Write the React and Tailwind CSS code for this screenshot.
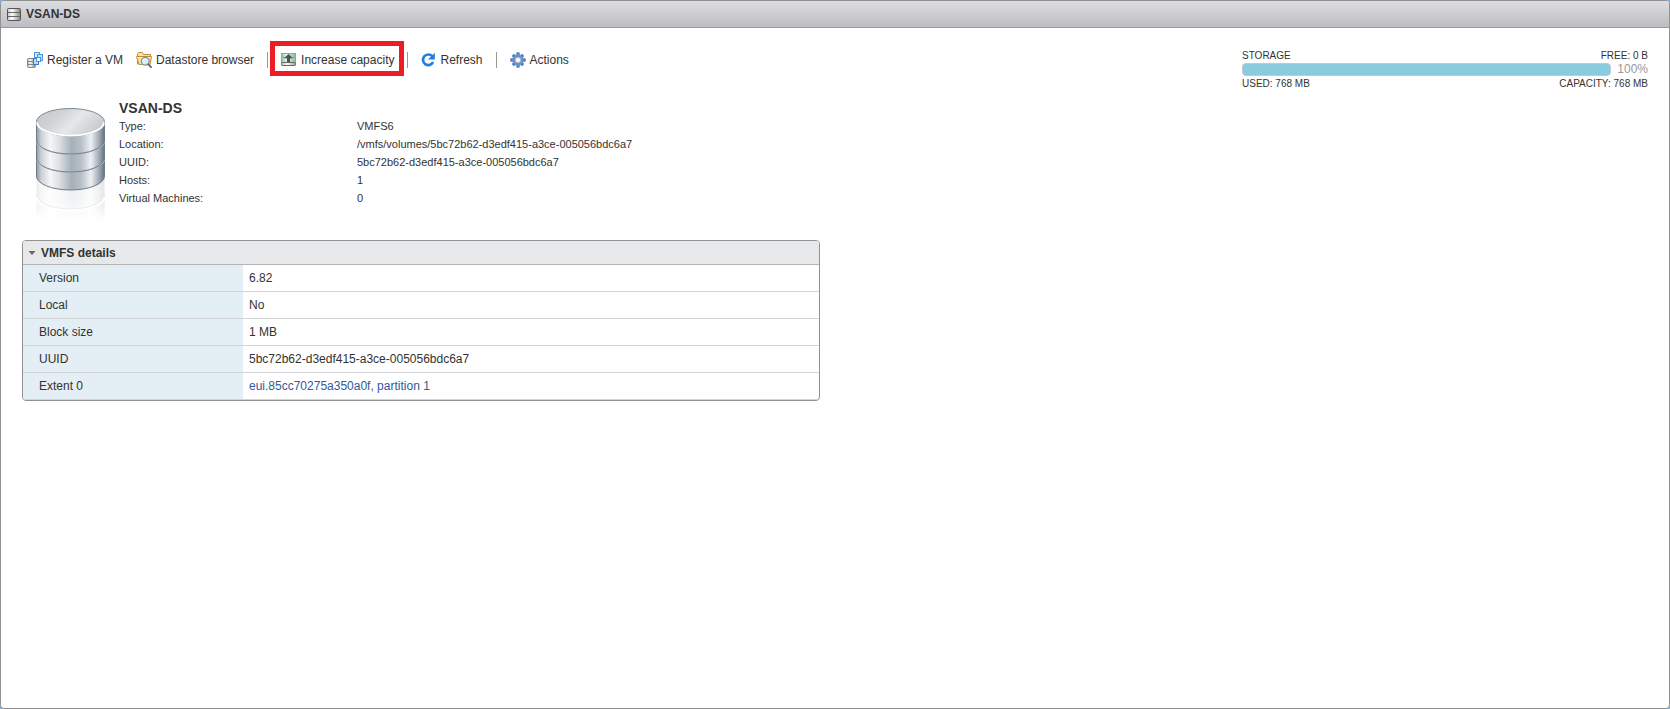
import React, { useState } from "react";

function ServerStackIcon() {
  return (
    <svg width="16" height="16" viewBox="0 0 16 16" aria-hidden="true">
      <defs>
        <linearGradient id="stackFill" x1="0" x2="1" y1="0" y2="0">
          <stop offset="0" stopColor="#c4c4c4" />
          <stop offset="0.35" stopColor="#ffffff" />
          <stop offset="1" stopColor="#858585" />
        </linearGradient>
      </defs>
      <rect x="1.5" y="2.5" width="13" height="12" rx="1" fill="url(#stackFill)" stroke="#555" />
      <path d="M2 6.5h12M2 10.5h12" stroke="#666" />
    </svg>
  );
}

function RegisterVmIcon() {
  return (
    <svg width="16" height="16" viewBox="0 0 16 16" aria-hidden="true">
      <defs>
        <linearGradient id="regFill" x1="0" x2="1" y1="0" y2="0">
          <stop offset="0" stopColor="#b0b0b0" />
          <stop offset="0.35" stopColor="#fafafa" />
          <stop offset="1" stopColor="#808080" />
        </linearGradient>
      </defs>
      <rect x="0.5" y="6.5" width="8" height="9" rx="1" fill="url(#regFill)" stroke="#888" />
      <path d="M1 9.5h7M1 12.5h7" stroke="#888" />
      <rect x="7.5" y="0.5" width="5" height="5" fill="#d6ebfd" stroke="#4a96e0" />
      <rect x="10.5" y="2.5" width="5" height="6" fill="#c4e1fb" stroke="#4a96e0" />
      <rect x="6.5" y="6.5" width="5" height="6" fill="#b9dcfa" stroke="#2f80d0" />
      <rect x="9.5" y="5.5" width="4" height="4" fill="#eaf5fe" stroke="#4a96e0" />
    </svg>
  );
}

function FolderSearchIcon() {
  return (
    <svg width="16" height="16" viewBox="0 0 16 16" aria-hidden="true">
      <path d="M1.5 12.5V1.5L2.5 0.5H6.5L7.5 2.5H14.5V5" fill="#f9e3ac" stroke="#c08c3a" />
      <path d="M0.5 4.5H15.5L14 12.5H3Z" fill="#fbdf9c" stroke="#c08c3a" strokeLinejoin="round" />
      <path d="M1.5 5.5H14.5" stroke="#fff2cf" />
      <circle cx="9.3" cy="9.3" r="3.9" fill="#d9edfa" stroke="#7b93a8" strokeWidth="1.2" />
      <path d="M7.2 9.3a2.2 2.2 0 0 1 2-2.2" stroke="#fff" fill="none" />
      <path d="M12.2 12.2L15 15.2" stroke="#5b6874" strokeWidth="1.8" strokeLinecap="round" />
    </svg>
  );
}

function IncreaseIcon() {
  return (
    <svg width="16" height="16" viewBox="0 0 16 16" aria-hidden="true">
      <defs>
        <linearGradient id="incFill" x1="0" x2="1" y1="0" y2="0">
          <stop offset="0" stopColor="#8fc3a0" />
          <stop offset="0.35" stopColor="#e4f5e8" />
          <stop offset="1" stopColor="#85bd96" />
        </linearGradient>
        <linearGradient id="incBase" x1="0" x2="1" y1="0" y2="0">
          <stop offset="0" stopColor="#b5b5b5" />
          <stop offset="0.4" stopColor="#fff" />
          <stop offset="1" stopColor="#9a9a9a" />
        </linearGradient>
      </defs>
      <rect x="0.5" y="1.5" width="14" height="9" fill="url(#incFill)" stroke="#86ad92" />
      <path d="M1 5.5h13" stroke="#7fb391" />
      <rect x="0.5" y="10.5" width="14" height="3" rx="0.8" fill="url(#incBase)" stroke="#666" />
      <path d="M7.5 2L12 6.2H9V10H6V6.2H3Z" fill="#505050" />
    </svg>
  );
}

function RefreshIcon() {
  return (
    <svg width="15" height="16" viewBox="1 0 15 16" aria-hidden="true">
      <path d="M12.2 4.2A5.3 5.3 0 1 0 13.1 10" fill="none" stroke="#1f80e0" strokeWidth="2.7" />
      <path d="M14.8 0.8V7.6H8Z" fill="#1f80e0" />
    </svg>
  );
}

function GearIcon() {
  return (
    <svg width="16" height="16" viewBox="0 0 16 16" aria-hidden="true">
      <g fill="#567fbd">
        <rect x="6.3" y="0.2" width="3.4" height="15.6" rx="0.8" />
        <rect x="0.2" y="6.3" width="15.6" height="3.4" rx="0.8" />
        <rect x="6.3" y="0.6" width="3.4" height="14.8" rx="0.8" transform="rotate(45 8 8)" />
        <rect x="6.3" y="0.6" width="3.4" height="14.8" rx="0.8" transform="rotate(-45 8 8)" />
      </g>
      <circle cx="8" cy="8" r="5.7" fill="#6792d0" />
      <circle cx="8" cy="8" r="3.1" fill="#b4bfce" />
      <circle cx="8" cy="8" r="2.1" fill="#fff" />
    </svg>
  );
}

function DatastoreImage() {
  const band = (y) => `M0.5 ${y}A34 14 0 0 0 68.5 ${y}V${y + 18}A34 14 0 0 1 0.5 ${y + 18}Z`;
  return (
    <svg width="69" height="113" viewBox="0 0 69 113" className="shrink-0" role="img" aria-label="Datastore">
      <defs>
        <linearGradient id="band" x1="0" x2="1" y1="0" y2="0">
          <stop offset="0" stopColor="#8f9aa4" />
          <stop offset="0.07" stopColor="#cbd1d6" />
          <stop offset="0.2" stopColor="#f5f6f7" />
          <stop offset="0.32" stopColor="#dfe3e6" />
          <stop offset="0.52" stopColor="#a5b0b9" />
          <stop offset="0.66" stopColor="#b8c1c8" />
          <stop offset="0.8" stopColor="#eef1f3" />
          <stop offset="0.93" stopColor="#99a4af" />
          <stop offset="1" stopColor="#64717e" />
        </linearGradient>
        <linearGradient id="lid" x1="0" x2="1" y1="0.3" y2="0.7">
          <stop offset="0" stopColor="#c6cacd" />
          <stop offset="0.3" stopColor="#d2d5d7" />
          <stop offset="0.55" stopColor="#e6e7e8" />
          <stop offset="0.8" stopColor="#d2d5d7" />
          <stop offset="1" stopColor="#c3c7ca" />
        </linearGradient>
        <linearGradient id="fade" x1="0" x2="0" y1="0" y2="1">
          <stop offset="0" stopColor="#fff" stopOpacity="0.6" />
          <stop offset="0.5" stopColor="#fff" stopOpacity="0.65" />
          <stop offset="1" stopColor="#fff" />
        </linearGradient>
      </defs>
      <path d="M0.5 68V112H68.5V68Z" fill="url(#band)" opacity="0.5" />
      <path d="M0.5 87A34 14 0 0 0 68.5 87" fill="none" stroke="#8d99a4" />
      <path d="M0.5 88.5A34 14 0 0 0 68.5 88.5" fill="none" stroke="#fff" strokeWidth="2" />
      <rect x="0" y="68" width="69" height="45" fill="url(#fade)" />
      {[50, 32, 14].map((y) => (
        <g key={y}>
          <path d={band(y)} fill="url(#band)" stroke="#6e7b87" />
          <path d={`M1 ${y + 1.8}A34 14 0 0 0 68 ${y + 1.8}`} fill="none" stroke="#fff" strokeWidth="2" strokeOpacity="0.85" />
        </g>
      ))}
      <ellipse cx="34.5" cy="14" rx="34" ry="13.5" fill="url(#lid)" />
      <path d="M0.5 14A34 13.5 0 0 1 68.5 14" fill="none" stroke="#7b8791" />
      <path d="M1 14A33.5 13.5 0 0 0 68 14" fill="none" stroke="#fff" strokeWidth="1.5" />
    </svg>
  );
}

function ToolButton({ icon, children, highlighted }) {
  return (
    <button type="button" className="relative flex h-4 items-center gap-1 whitespace-nowrap text-xs leading-4">
      {icon}
      {children}
      {highlighted && (
        <span className="pointer-events-none absolute -top-[11px] -right-[10px] -bottom-2 -left-[11px] border-5 border-[#ee1c25]" />
      )}
    </button>
  );
}

function Separator() {
  return <span className="h-4 w-px bg-[#999]" />;
}

const summary = [
  ["Type:", "VMFS6"],
  ["Location:", "/vmfs/volumes/5bc72b62-d3edf415-a3ce-005056bdc6a7"],
  ["UUID:", "5bc72b62-d3edf415-a3ce-005056bdc6a7"],
  ["Hosts:", "1"],
  ["Virtual Machines:", "0"],
];

const details = [
  ["Version", "6.82"],
  ["Local", "No"],
  ["Block size", "1 MB"],
  ["UUID", "5bc72b62-d3edf415-a3ce-005056bdc6a7"],
  ["Extent 0", "eui.85cc70275a350a0f, partition 1"],
];

export default function App() {
  const [open, setOpen] = useState(true);
  return (
    <div className="flex min-h-screen bg-[#86b0dc] font-['Liberation_Sans',Arial,sans-serif] text-[#333]">
      <div className="flex flex-1 flex-col overflow-hidden rounded-[4px] border border-[#919191] bg-white">
        <header className="flex h-[27px] items-center gap-1 border-b border-[#999] bg-linear-to-b from-[#dedee2] to-[#bcbdc1] pl-[5px]">
          <ServerStackIcon />
          <h1 className="text-xs font-bold leading-4">VSAN-DS</h1>
        </header>

        <main className="px-[21px] pt-[21px]">
          <div className="flex items-start justify-between">
            <div>
              <div className="flex items-center gap-[13px] pt-[3px] pl-[5px]">
                <ToolButton icon={<RegisterVmIcon />}>Register a VM</ToolButton>
                <ToolButton icon={<FolderSearchIcon />}>Datastore browser</ToolButton>
                <Separator />
                <ToolButton icon={<IncreaseIcon />} highlighted>Increase capacity</ToolButton>
                <Separator />
                <ToolButton icon={<RefreshIcon />}>Refresh</ToolButton>
                <Separator />
                <ToolButton icon={<GearIcon />}>Actions</ToolButton>
              </div>

              <section className="mt-[31px] flex gap-[14px] pl-[14px]">
                <div className="pt-[9px]">
                  <DatastoreImage />
                </div>
                <div>
                  <h2 className="text-sm font-bold leading-[18px]">VSAN-DS</h2>
                  <dl className="grid grid-cols-[238px_auto] text-[11px] leading-[18px]">
                    {summary.map(([k, v]) => (
                      <React.Fragment key={k}>
                        <dt>{k}</dt>
                        <dd>{v}</dd>
                      </React.Fragment>
                    ))}
                  </dl>
                </div>
              </section>
            </div>

            <section className="w-[406px] text-[10px] leading-[14px]">
              <div className="flex justify-between">
                <span>STORAGE</span>
                <span>FREE: 0 B</span>
              </div>
              <div className="mb-px flex items-center gap-[6px]">
                <div role="progressbar" aria-valuenow={100} aria-label="Storage used" className="h-[13px] flex-1 rounded-[4px] border border-[#c6c8cc] bg-[#89cbdf]" />
                <span className="text-xs leading-[13px] text-[#999]">100%</span>
              </div>
              <div className="flex justify-between">
                <span>USED: 768 MB</span>
                <span>CAPACITY: 768 MB</span>
              </div>
            </section>
          </div>

          <div className="mt-[19px] grid grid-cols-2 gap-[30px]">
            <section className="overflow-hidden rounded-[4px] border border-[#919191] text-xs">
              <h3 className="border-b border-[#b5b5b5] bg-[#e7e8ea] font-bold">
                <button type="button" aria-expanded={open} onClick={() => setOpen(!open)} className="flex h-[23px] w-full items-center gap-[5px] pl-[5px] text-left leading-4">
                  <svg width="8" height="4" viewBox="0 0 8 4" aria-hidden="true">
                    <path d="M0.5 0H7.5L4 4Z" fill="#666" />
                  </svg>
                  VMFS details
                </button>
              </h3>
              {open && (
                <table className="w-full border-separate border-spacing-0">
                  <tbody>
                    {details.map(([k, v]) => (
                      <tr key={k} className="h-[27px]">
                        <th scope="row" className="w-[220px] border-b border-[#d2d4d7] bg-[#e4eff5] pl-4 text-left font-normal">{k}</th>
                        <td className="border-b border-[#d2d4d7] pl-[6px]">
                          {k === "Extent 0" ? <a href="#extent" className="text-[#31599b]">{v}</a> : v}
                        </td>
                      </tr>
                    ))}
                  </tbody>
                </table>
              )}
            </section>
          </div>
        </main>
      </div>
    </div>
  );
}
